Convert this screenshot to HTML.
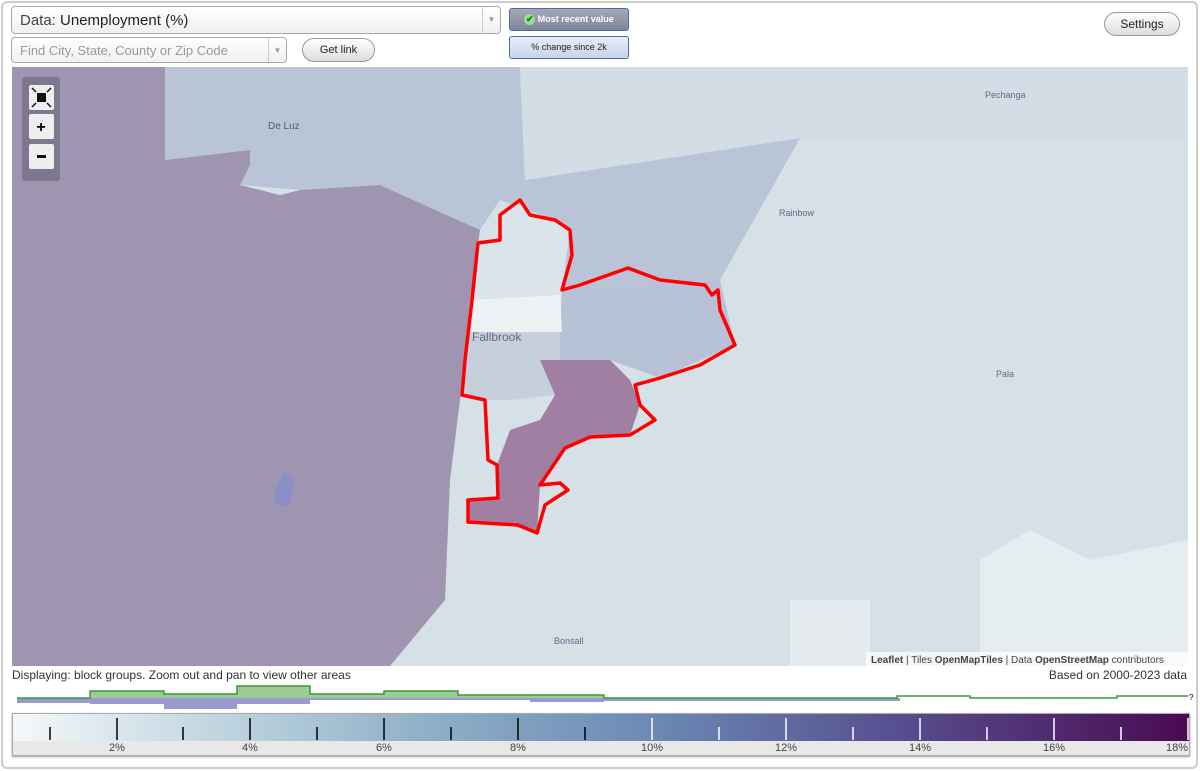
<!DOCTYPE html>
<html><head><meta charset="utf-8"><style>
*{box-sizing:border-box}
body{margin:0;width:1200px;height:771px;background:#fff;font-family:"Liberation Sans",sans-serif;overflow:hidden;position:relative}
.frame{position:absolute;left:1px;top:1px;width:1197px;height:768px;border:2px solid #ccc;border-radius:6px}
.sel{position:absolute;border:1px solid #aaa;border-radius:4px;background:linear-gradient(#fff,#f0f0f0);font-size:14px;color:#444;padding:5px 8px}
.arr{position:absolute;right:0;top:0;bottom:0;width:18px;border-left:1px solid #ccc;color:#999;font-size:8px;text-align:center;line-height:26px}
.btn{position:absolute;border:1px solid #999;border-radius:12px;background:linear-gradient(#fff,#ddd);font-size:11px;color:#222;text-align:center}
.tog{position:absolute;border:1px solid #4a6fa5;border-radius:3px;font-size:9px;text-align:center;line-height:19px}
.lab{position:absolute;font-size:12px;color:#333}
</style></head><body>
<div class="frame"></div>
<div class="sel" style="left:11px;top:6px;width:490px;height:28px;font-size:15px">Data: <span style="color:#222">Unemployment (%)</span><div class="arr" style="line-height:26px">▼</div></div>
<div class="sel" style="left:11px;top:37px;width:276px;height:26px;color:#999;font-size:13px;padding-top:5px">Find City, State, County or Zip Code<div class="arr">▼</div></div>
<div class="btn" style="left:302px;top:38px;width:73px;height:24px;line-height:22px">Get link</div>
<div class="tog" style="left:509px;top:8px;width:120px;height:23px;background:linear-gradient(#a5a9b8,#7e859b);color:#fff;font-weight:bold;line-height:21px"><span style="display:inline-block;width:11px;height:11px;border-radius:50%;background:#9d9;color:#080;font-size:9px;line-height:11px;vertical-align:middle">✔</span> Most recent value</div>
<div class="tog" style="left:509px;top:36px;width:120px;height:23px;background:linear-gradient(#e8eef8,#c7d4ea);color:#222;line-height:21px">% change since 2k</div>
<div class="btn" style="left:1104px;top:12px;width:76px;height:24px;line-height:22px;font-size:12px">Settings</div>
<svg style="position:absolute;left:12px;top:67px" width="1176" height="599" viewBox="12 67 1176 599">
<rect x="12" y="67" width="1176" height="599" fill="#d5e0e7"/>
<polygon points="165,67 520,67 525,180 800,138 720,280 560,290 555,220 500,200 480,230 380,185 300,190 240,185 250,150 165,160" fill="#b9c5d7"/>
<polygon points="520,67 1188,67 1188,140 800,138 525,180" fill="#d3dde6"/>
<polygon points="560,290 720,280 735,345 660,378 610,360 560,360" fill="#b7c2d6"/>
<polygon points="980,560 1030,530 1090,560 1188,540 1188,666 980,666" fill="#e6edf0"/>
<polygon points="790,600 870,600 870,666 790,666" fill="#e4eaee"/>
<polygon points="12,67 165,67 165,160 250,150 250,165 240,185 280,195 300,190 380,185 480,230 470,300 460,400 450,480 445,600 390,666 12,666" fill="#a095b0"/>
<polygon points="478,243 500,240 500,215 520,200 530,215 555,220 570,230 562,290 560,330 472,330" fill="#dbe4ea"/>
<polygon points="470,300 560,295 562,332 472,332" fill="#eef2f4"/>
<polygon points="470,332 560,332 560,360 540,360 555,395 510,400 485,400 462,395 465,360" fill="#c6d0dd"/>
<polygon points="540,360 610,360 630,380 640,405 630,435 590,437 565,448 540,485 537,533 510,525 468,522 468,500 498,498 497,465 510,430 540,420 555,395" fill="#a17fa2"/>
<path d="M275,490 l10,-20 l10,10 l-5,25 l-15,0z" fill="#8a8fc8"/>
<path d="M500,215 520,200 530,215 555,220 570,230 572,255 562,290 580,285 628,268 660,280 705,285 712,295 718,290 720,310 735,345 700,365 660,378 635,385 640,405 655,420 630,435 590,437 565,448 540,485 560,483 568,490 545,505 537,533 518,525 468,522 468,500 498,498 497,465 488,460 485,400 462,395 465,360 472,300 478,243 500,240z" fill="none" stroke="#f00" stroke-width="3.5" stroke-linejoin="round"/>
<text x="268" y="129" font-size="10" fill="#557" font-family="Liberation Sans">De Luz</text>
<text x="472" y="341" font-size="12" fill="#668" font-family="Liberation Sans">Fallbrook</text>
<text x="779" y="216" font-size="9" fill="#668" font-family="Liberation Sans">Rainbow</text>
<text x="996" y="377" font-size="9" fill="#668" font-family="Liberation Sans">Pala</text>
<text x="985" y="98" font-size="9" fill="#668" font-family="Liberation Sans">Pechanga</text>
<text x="554" y="644" font-size="9" fill="#668" font-family="Liberation Sans">Bonsall</text>
<rect x="22" y="77" width="38" height="104" rx="3" fill="rgba(90,90,110,.5)"/>
<rect x="29" y="85" width="25" height="25" rx="2" fill="#eee"/><rect x="37" y="93" width="9" height="9" fill="#111"/>
<path d="M32,88 l4,4 M51,88 l-4,4 M32,107 l4,-4 M51,107 l-4,-4" stroke="#111" stroke-width="1.5"/>
<rect x="29" y="114" width="25" height="25" rx="2" fill="#eee"/><text x="41" y="132" font-size="16" text-anchor="middle" font-weight="bold" font-family="Liberation Sans">+</text>
<rect x="29" y="144" width="25" height="25" rx="2" fill="#eee"/><rect x="37" y="155" width="9" height="3" fill="#111"/>
<rect x="866" y="652" width="322" height="14" fill="rgba(255,255,255,.7)"/>
<text x="871" y="663" font-size="10" fill="#444" font-family="Liberation Sans"><tspan font-weight="bold">Leaflet</tspan> | Tiles <tspan font-weight="bold">OpenMapTiles</tspan> | Data <tspan font-weight="bold">OpenStreetMap</tspan> contributors</text>
</svg>
<div class="lab" style="left:12px;top:668px">Displaying: block groups. Zoom out and pan to view other areas</div>
<div class="lab" style="right:13px;top:668px">Based on 2000-2023 data</div>
<svg style="position:absolute;left:0;top:684px" width="1200" height="30">
<path d="M17,14 H90 V7 H164 V10 H237 V2 H310 V10 H384 V7 H458 V11 H604 V14 H17Z" fill="#9ccc95"/>
<path d="M17,14 H604 V18 H530 V16 H310 V20 H237 V25 H164 V20 H90 V19 H17Z M604,14 H900 V17 H604Z" fill="#9a9ad0"/>
<path d="M17,14 H90 V7 H164 V10 H237 V2 H310 V10 H384 V7 H458 V11 H604 V14 H897 V12 H970 V14 H1117 V12 H1188" fill="none" stroke="#3a9a3a" stroke-width="1.5"/>
<text x="1189" y="16" font-size="8" font-family="Liberation Sans">?</text>
</svg>
<div style="position:absolute;left:12px;top:713px;width:1178px;height:43px;border:1px solid #aaa;box-shadow:0 1px 2px #999">
<div style="height:27px;background:linear-gradient(90deg,#f5f8fa,#b8d0dc 20%,#8fb0c8 35%,#6a88b4 55%,#574f90 75%,#4a0a52)"></div>
<div style="height:14px;background:#e8e8e8"></div>
</div>
<svg style="position:absolute;left:12px;top:713px" width="1178" height="44" font-family="Liberation Sans" font-size="11" fill="#444">
<g stroke="#000" stroke-width="1.5">
<line x1="38" y1="14" x2="38" y2="27"/><line x1="105" y1="5" x2="105" y2="27"/><line x1="171" y1="14" x2="171" y2="27"/><line x1="238" y1="5" x2="238" y2="27"/><line x1="305" y1="14" x2="305" y2="27"/><line x1="372" y1="5" x2="372" y2="27"/><line x1="439" y1="14" x2="439" y2="27"/><line x1="506" y1="5" x2="506" y2="27"/><line x1="573" y1="14" x2="573" y2="27"/></g>
<g stroke="#fff" stroke-width="1.5">
<line x1="640" y1="5" x2="640" y2="27"/><line x1="707" y1="14" x2="707" y2="27"/><line x1="774" y1="5" x2="774" y2="27"/><line x1="841" y1="14" x2="841" y2="27"/><line x1="908" y1="5" x2="908" y2="27"/><line x1="975" y1="14" x2="975" y2="27"/><line x1="1042" y1="5" x2="1042" y2="27"/><line x1="1109" y1="14" x2="1109" y2="27"/><line x1="1176" y1="5" x2="1176" y2="27"/></g>
<text x="105" y="38" text-anchor="middle">2%</text><text x="238" y="38" text-anchor="middle">4%</text><text x="372" y="38" text-anchor="middle">6%</text><text x="506" y="38" text-anchor="middle">8%</text><text x="640" y="38" text-anchor="middle">10%</text><text x="774" y="38" text-anchor="middle">12%</text><text x="908" y="38" text-anchor="middle">14%</text><text x="1042" y="38" text-anchor="middle">16%</text><text x="1165" y="38" text-anchor="middle">18%</text>
</svg>
</body></html>
